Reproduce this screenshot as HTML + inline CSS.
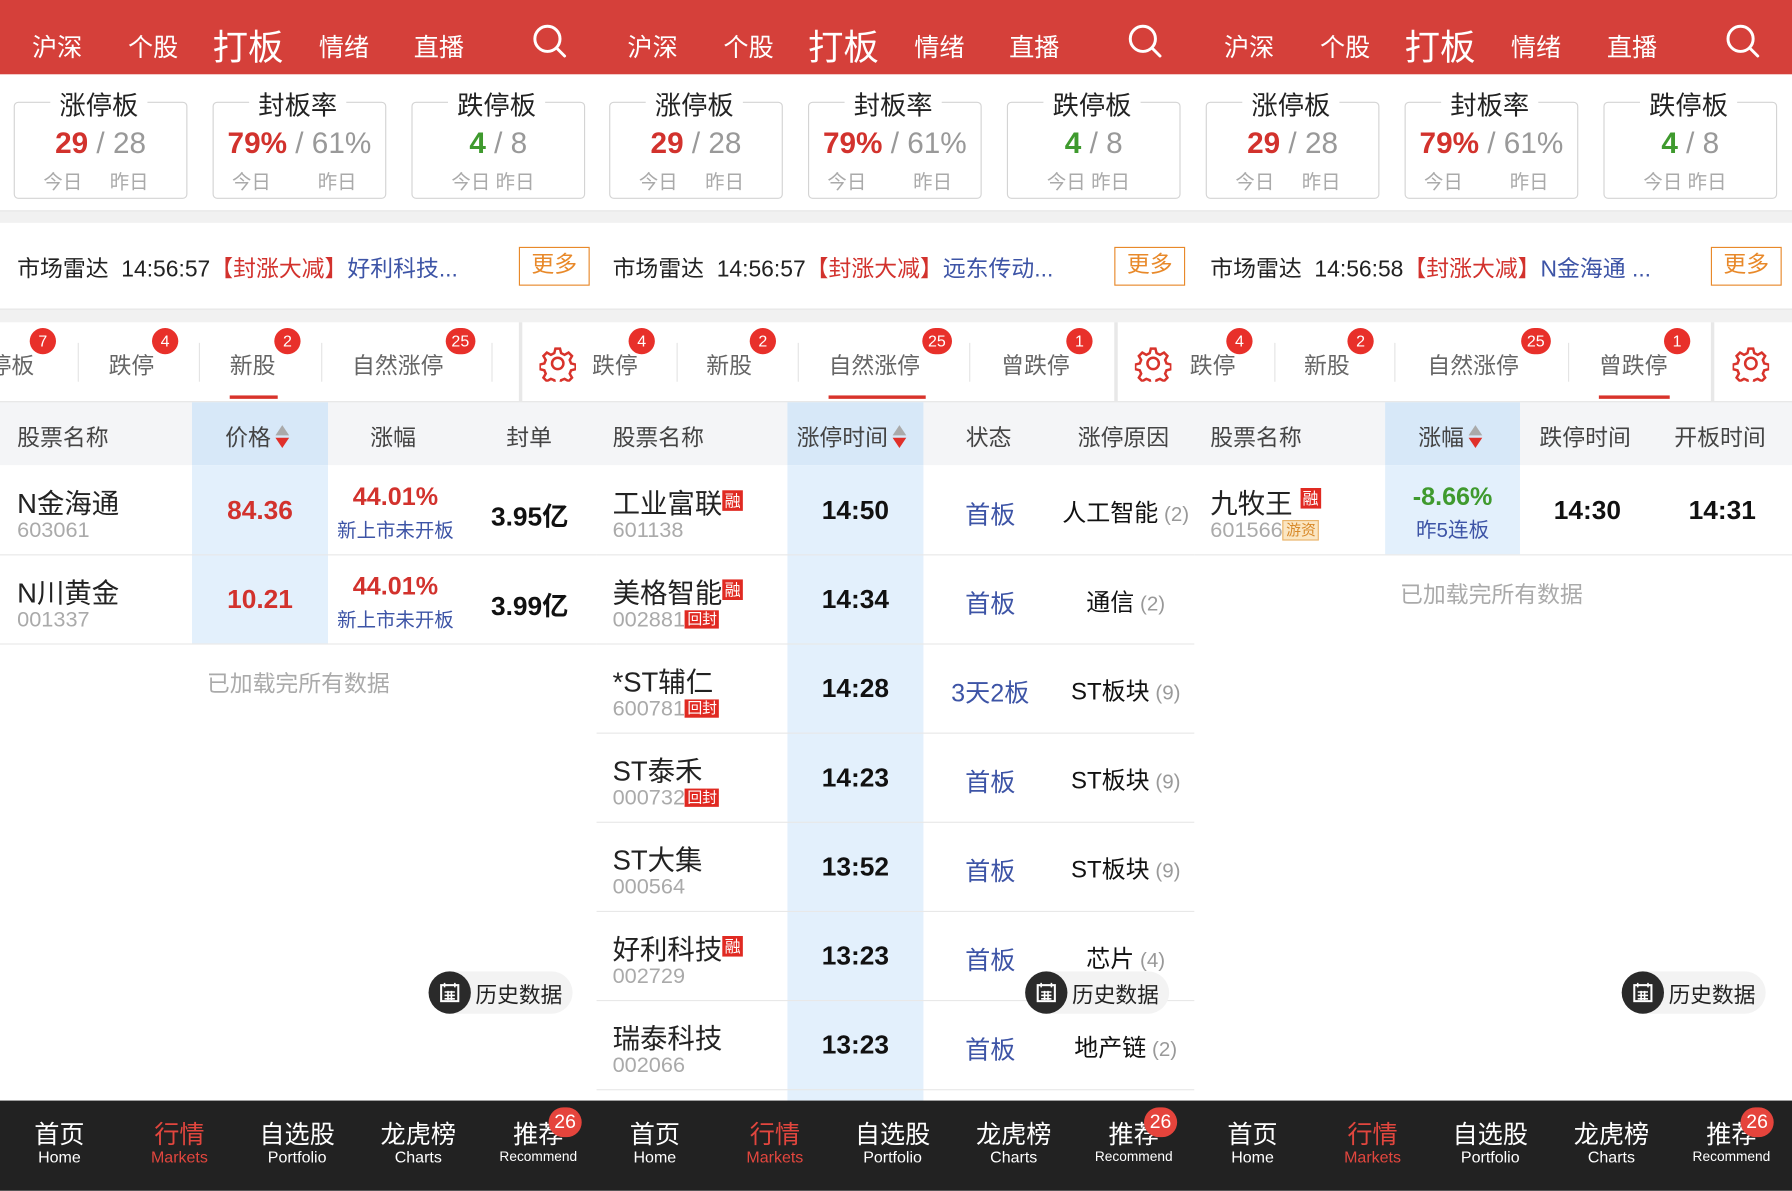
<!DOCTYPE html>
<html><head><meta charset="utf-8"><style>
*{margin:0;padding:0;box-sizing:border-box}
body{width:1792px;height:1191px;overflow:hidden;background:#fff;font-family:"Liberation Sans","Noto Sans CJK SC",sans-serif;}
#w{position:relative;width:1568px;height:1042px;transform:scale(1.142857);transform-origin:0 0;overflow:hidden}
.a{position:absolute;white-space:nowrap}
.c{text-align:center}
.hd{color:#fff;font-size:22px;top:24px}
.box{border:1.5px solid #d4d4d4;border-radius:4px;top:89px;height:85px;width:152px}
.bt{top:73px;font-size:23px;color:#222;background:#fff;padding:0 8px}
.num{top:110px;font-size:26px;width:152px;text-align:center;color:#999}
.num b{font-weight:bold}
.lab{top:145px;font-size:17px;color:#aaa}
.r{color:#d2322d}.g{color:#3f9a2e}.b{color:#3d54a6}.gr{color:#999}
.tab{top:304px;font-size:20px;color:#666}
.bd{top:287px;height:23px;min-width:23px;border-radius:12px;background:#e8302a;color:#fff;font-size:14px;line-height:23px;text-align:center;padding:0 5px}
.dv{top:300px;width:1px;height:34px;background:#e4e4e4}
.th{top:367px;font-size:20px;color:#444}
.nm{font-size:24px;color:#222}
.cd{font-size:19px;color:#aaa}
.v{font-size:23px;color:#111;font-weight:bold}
.tag{display:inline-block;background:#e02a22;color:#fff;font-size:14px;line-height:18px;padding:0 2px;vertical-align:6px}
.ctag{display:inline-block;background:#e02a22;color:#fff;font-size:13px;line-height:16px;padding:0 2px;vertical-align:2px}
.hl{height:1px;background:#e8e8e8}
.nav{top:963px;height:79px;background:#222;width:1568px}
.nz{top:975px;font-size:22px;color:#fff;width:100px;text-align:center}
.ne{top:1004px;font-size:14px;color:#fff;width:100px;text-align:center}
.hist{height:37px;border-radius:19px;background:#f3f3f3;width:126px}
.hist i{position:absolute;left:0;top:0;width:37px;height:37px;border-radius:50%;background:#2a2a2a}
.hist span{position:absolute;left:41px;top:6px;font-size:19px;color:#222}
.srt{display:inline-block;width:12px;height:22px;vertical-align:-3px;margin-left:4px;position:relative}
.srt:before{content:"";position:absolute;left:0;top:1px;border-left:6px solid transparent;border-right:6px solid transparent;border-bottom:9px solid #aaa}
.srt:after{content:"";position:absolute;left:0;top:12px;border-left:6px solid transparent;border-right:6px solid transparent;border-top:9px solid #e0302a}
</style></head><body><div id="w">

<div class="a" style="left:0;top:0;width:1568px;height:65px;background:#d5403a"></div>
<div class="a hd" style="left:28px">沪深</div><div class="a hd" style="left:112px">个股</div><div class="a hd" style="left:186px;top:16px;font-size:31px">打板</div><div class="a hd" style="left:279px">情绪</div><div class="a hd" style="left:362px">直播</div>
<div class="a hd" style="left:549px">沪深</div><div class="a hd" style="left:633px">个股</div><div class="a hd" style="left:707px;top:16px;font-size:31px">打板</div><div class="a hd" style="left:800px">情绪</div><div class="a hd" style="left:883px">直播</div>
<div class="a hd" style="left:1071px">沪深</div><div class="a hd" style="left:1155px">个股</div><div class="a hd" style="left:1229px;top:16px;font-size:31px">打板</div><div class="a hd" style="left:1322px">情绪</div><div class="a hd" style="left:1406px">直播</div>
<svg class="a" style="left:464px;top:20px" width="34" height="34" viewBox="0 0 34 34"><circle cx="15" cy="14" r="11" fill="none" stroke="#fff" stroke-width="2.6"/><path d="M23 22l7 7" stroke="#fff" stroke-width="2.6" stroke-linecap="round"/></svg>
<svg class="a" style="left:985px;top:20px" width="34" height="34" viewBox="0 0 34 34"><circle cx="15" cy="14" r="11" fill="none" stroke="#fff" stroke-width="2.6"/><path d="M23 22l7 7" stroke="#fff" stroke-width="2.6" stroke-linecap="round"/></svg>
<svg class="a" style="left:1508px;top:20px" width="34" height="34" viewBox="0 0 34 34"><circle cx="15" cy="14" r="11" fill="none" stroke="#fff" stroke-width="2.6"/><path d="M23 22l7 7" stroke="#fff" stroke-width="2.6" stroke-linecap="round"/></svg>

<div class="a box" style="left:12px"></div><div class="a bt" style="left:44px">涨停板</div><div class="a num" style="left:12px"><b class="r">29</b> / 28</div><div class="a lab" style="left:38px">今日</div><div class="a lab" style="left:96px">昨日</div>
<div class="a box" style="left:186px"></div><div class="a bt" style="left:218px">封板率</div><div class="a num" style="left:186px"><b class="r">79%</b> / 61%</div><div class="a lab" style="left:203px">今日</div><div class="a lab" style="left:278px">昨日</div>
<div class="a box" style="left:360px"></div><div class="a bt" style="left:392px">跌停板</div><div class="a num" style="left:360px"><b class="g">4</b> / 8</div><div class="a lab" style="left:395px">今日 昨日</div>

<div class="a box" style="left:533px"></div><div class="a bt" style="left:565px">涨停板</div><div class="a num" style="left:533px"><b class="r">29</b> / 28</div><div class="a lab" style="left:559px">今日</div><div class="a lab" style="left:617px">昨日</div>
<div class="a box" style="left:707px"></div><div class="a bt" style="left:739px">封板率</div><div class="a num" style="left:707px"><b class="r">79%</b> / 61%</div><div class="a lab" style="left:724px">今日</div><div class="a lab" style="left:799px">昨日</div>
<div class="a box" style="left:881px"></div><div class="a bt" style="left:913px">跌停板</div><div class="a num" style="left:881px"><b class="g">4</b> / 8</div><div class="a lab" style="left:916px">今日 昨日</div>

<div class="a box" style="left:1055px"></div><div class="a bt" style="left:1087px">涨停板</div><div class="a num" style="left:1055px"><b class="r">29</b> / 28</div><div class="a lab" style="left:1081px">今日</div><div class="a lab" style="left:1139px">昨日</div>
<div class="a box" style="left:1229px"></div><div class="a bt" style="left:1261px">封板率</div><div class="a num" style="left:1229px"><b class="r">79%</b> / 61%</div><div class="a lab" style="left:1246px">今日</div><div class="a lab" style="left:1321px">昨日</div>
<div class="a box" style="left:1403px"></div><div class="a bt" style="left:1435px">跌停板</div><div class="a num" style="left:1403px"><b class="g">4</b> / 8</div><div class="a lab" style="left:1438px">今日 昨日</div>

<div class="a" style="left:0;top:184px;width:1568px;height:11px;background:#f1f1f1;border-top:1px solid #e6e6e6"></div>
<div class="a" style="left:0;top:270px;width:1568px;height:12px;background:#f1f1f1;border-top:1px solid #e6e6e6"></div>

<div class="a" style="left:15px;top:219px;font-size:20px;color:#222">市场雷达&nbsp;&nbsp;14:56:57<span class="r">【封涨大减】</span><span class="b">好利科技...</span></div>
<div class="a c" style="left:454px;top:216px;width:62px;height:34px;border:1.5px solid #e8892a;color:#e8892a;font-size:20px;line-height:31px">更多</div>
<div class="a" style="left:536px;top:219px;font-size:20px;color:#222">市场雷达&nbsp;&nbsp;14:56:57<span class="r">【封涨大减】</span><span class="b">远东传动...</span></div>
<div class="a c" style="left:975px;top:216px;width:62px;height:34px;border:1.5px solid #e8892a;color:#e8892a;font-size:20px;line-height:31px">更多</div>
<div class="a" style="left:1059px;top:219px;font-size:20px;color:#222">市场雷达&nbsp;&nbsp;14:56:58<span class="r">【封涨大减】</span><span class="b">N金海通 ...</span></div>
<div class="a c" style="left:1497px;top:216px;width:62px;height:34px;border:1.5px solid #e8892a;color:#e8892a;font-size:20px;line-height:31px">更多</div>

<div class="a tab" style="left:-10px">停板</div><div class="a bd" style="left:26px">7</div><div class="a dv" style="left:68px"></div>
<div class="a tab" style="left:95px">跌停</div><div class="a bd" style="left:133px">4</div><div class="a dv" style="left:174px"></div>
<div class="a tab" style="left:201px">新股</div><div class="a bd" style="left:240px">2</div><div class="a" style="left:201px;top:346px;width:42px;height:3px;background:#d8332b"></div><div class="a dv" style="left:281px"></div>
<div class="a tab" style="left:308px">自然涨停</div><div class="a bd" style="left:390px">25</div><div class="a dv" style="left:430px"></div>
<div class="a" style="left:454px;top:282px;width:3px;height:70px;background:#e8e8e8"></div>
<div class="a tab" style="left:518px">跌停</div><div class="a bd" style="left:550px">4</div><div class="a dv" style="left:592px"></div>
<div class="a tab" style="left:618px">新股</div><div class="a bd" style="left:656px">2</div><div class="a dv" style="left:698px"></div>
<div class="a tab" style="left:725px">自然涨停</div><div class="a bd" style="left:807px">25</div><div class="a" style="left:725px;top:346px;width:85px;height:3px;background:#d8332b"></div><div class="a dv" style="left:848px"></div>
<div class="a tab" style="left:876px">曾跌停</div><div class="a bd" style="left:933px">1</div>
<div class="a" style="left:975px;top:282px;width:3px;height:70px;background:#e8e8e8"></div>
<div class="a tab" style="left:1041px">跌停</div><div class="a bd" style="left:1073px">4</div><div class="a dv" style="left:1115px"></div>
<div class="a tab" style="left:1141px">新股</div><div class="a bd" style="left:1179px">2</div><div class="a dv" style="left:1220px"></div>
<div class="a tab" style="left:1249px">自然涨停</div><div class="a bd" style="left:1331px">25</div><div class="a dv" style="left:1372px"></div>
<div class="a tab" style="left:1399px">曾跌停</div><div class="a bd" style="left:1456px">1</div><div class="a" style="left:1399px;top:346px;width:62px;height:3px;background:#d8332b"></div>
<div class="a" style="left:1497px;top:282px;width:3px;height:70px;background:#e8e8e8"></div>
<svg class="a" style="left:472px;top:302px" width="32" height="32" viewBox="0 0 32 32"><g fill="none" stroke="#d8332b" stroke-width="2.2"><circle cx="16" cy="16" r="5"/><path d="M14 3h4l1 4 3 1.5 3.5-2 3 3-2 3.5 1.2 3 4 1v4l-4 1-1.2 3 2 3.5-3 3-3.5-2-3 1.2-1 4h-4l-1-4-3-1.2-3.5 2-3-3 2-3.5-1.2-3-4-1v-4l4-1 1.2-3-2-3.5 3-3 3.5 2 3-1.5z"/></g></svg>
<svg class="a" style="left:993px;top:302px" width="32" height="32" viewBox="0 0 32 32"><g fill="none" stroke="#d8332b" stroke-width="2.2"><circle cx="16" cy="16" r="5"/><path d="M14 3h4l1 4 3 1.5 3.5-2 3 3-2 3.5 1.2 3 4 1v4l-4 1-1.2 3 2 3.5-3 3-3.5-2-3 1.2-1 4h-4l-1-4-3-1.2-3.5 2-3-3 2-3.5-1.2-3-4-1v-4l4-1 1.2-3-2-3.5 3-3 3.5 2 3-1.5z"/></g></svg>
<svg class="a" style="left:1516px;top:302px" width="32" height="32" viewBox="0 0 32 32"><g fill="none" stroke="#d8332b" stroke-width="2.2"><circle cx="16" cy="16" r="5"/><path d="M14 3h4l1 4 3 1.5 3.5-2 3 3-2 3.5 1.2 3 4 1v4l-4 1-1.2 3 2 3.5-3 3-3.5-2-3 1.2-1 4h-4l-1-4-3-1.2-3.5 2-3-3 2-3.5-1.2-3-4-1v-4l4-1 1.2-3-2-3.5 3-3 3.5 2 3-1.5z"/></g></svg>

<div class="a" style="left:0;top:351px;width:1568px;height:56px;background:#f4f5f7;border-top:1px solid #e6e6e6"></div>
<div class="a" style="left:168px;top:352px;width:119px;height:55px;background:#d7e8f8"></div>
<div class="a" style="left:689px;top:352px;width:119px;height:55px;background:#d7e8f8"></div>
<div class="a" style="left:1212px;top:352px;width:118px;height:55px;background:#d7e8f8"></div>

<div class="a th" style="left:15px">股票名称</div><div class="a th" style="left:197px">价格<span class="srt"></span></div><div class="a th" style="left:324px">涨幅</div><div class="a th" style="left:443px">封单</div>
<div class="a th" style="left:536px">股票名称</div><div class="a th" style="left:697px">涨停时间<span class="srt"></span></div><div class="a th" style="left:845px">状态</div><div class="a th" style="left:943px">涨停原因</div>
<div class="a th" style="left:1059px">股票名称</div><div class="a th" style="left:1241px">涨幅<span class="srt"></span></div><div class="a th" style="left:1347px">跌停时间</div><div class="a th" style="left:1465px">开板时间</div>

<div class="a" style="left:168px;top:407px;width:119px;height:156px;background:#e3f0fc"></div>
<div class="a" style="left:689px;top:407px;width:119px;height:556px;background:#e3f0fc"></div>
<div class="a" style="left:1212px;top:407px;width:118px;height:78px;background:#e3f0fc"></div>

<div class="a nm" style="left:15px;top:421px">N金海通</div><div class="a cd" style="left:15px;top:454px">603061</div>
<div class="a c v" style="left:168px;width:119px;top:433px;color:#d2322d">84.36</div>
<div class="a c r" style="left:287px;width:118px;top:422px;font-size:22px;font-weight:bold">44.01%</div><div class="a c b" style="left:287px;width:118px;top:450px;font-size:17px">新上市未开板</div>
<div class="a c v" style="left:405px;width:117px;top:433px">3.95亿</div>
<div class="a hl" style="left:0;top:485px;width:522px"></div>
<div class="a nm" style="left:15px;top:499px">N川黄金</div><div class="a cd" style="left:15px;top:532px">001337</div>
<div class="a c v" style="left:168px;width:119px;top:511px;color:#d2322d">10.21</div>
<div class="a c r" style="left:287px;width:118px;top:500px;font-size:22px;font-weight:bold">44.01%</div><div class="a c b" style="left:287px;width:118px;top:528px;font-size:17px">新上市未开板</div>
<div class="a c v" style="left:405px;width:117px;top:511px">3.99亿</div>
<div class="a hl" style="left:0;top:563px;width:522px"></div>
<div class="a c" style="left:0;width:522px;top:582px;font-size:20px;color:#aaa">已加载完所有数据</div>

<div class="a nm" style="left:536px;top:421px">工业富联<span class="tag">融</span></div><div class="a cd" style="left:536px;top:454px">601138</div>
<div class="a c v" style="left:689px;width:119px;top:433px">14:50</div><div class="a c b" style="left:808px;width:117px;top:433px;font-size:22px">首板</div><div class="a c" style="left:925px;width:120px;top:433px;font-size:21px;color:#111">人工智能<span class="gr" style="font-size:18px"> (2)</span></div>
<div class="a hl" style="left:522px;top:485px;width:523px"></div>
<div class="a nm" style="left:536px;top:499px">美格智能<span class="tag">融</span></div><div class="a cd" style="left:536px;top:532px">002881<span class="ctag">回封</span></div>
<div class="a c v" style="left:689px;width:119px;top:511px">14:34</div><div class="a c b" style="left:808px;width:117px;top:511px;font-size:22px">首板</div><div class="a c" style="left:925px;width:120px;top:511px;font-size:21px;color:#111">通信<span class="gr" style="font-size:18px"> (2)</span></div>
<div class="a hl" style="left:522px;top:563px;width:523px"></div>
<div class="a nm" style="left:536px;top:577px">*ST辅仁</div><div class="a cd" style="left:536px;top:610px">600781<span class="ctag">回封</span></div>
<div class="a c v" style="left:689px;width:119px;top:589px">14:28</div><div class="a c b" style="left:808px;width:117px;top:589px;font-size:22px">3天2板</div><div class="a c" style="left:925px;width:120px;top:589px;font-size:21px;color:#111">ST板块<span class="gr" style="font-size:18px"> (9)</span></div>
<div class="a hl" style="left:522px;top:641px;width:523px"></div>
<div class="a nm" style="left:536px;top:655px">ST泰禾</div><div class="a cd" style="left:536px;top:688px">000732<span class="ctag">回封</span></div>
<div class="a c v" style="left:689px;width:119px;top:667px">14:23</div><div class="a c b" style="left:808px;width:117px;top:667px;font-size:22px">首板</div><div class="a c" style="left:925px;width:120px;top:667px;font-size:21px;color:#111">ST板块<span class="gr" style="font-size:18px"> (9)</span></div>
<div class="a hl" style="left:522px;top:719px;width:523px"></div>
<div class="a nm" style="left:536px;top:733px">ST大集</div><div class="a cd" style="left:536px;top:766px">000564</div>
<div class="a c v" style="left:689px;width:119px;top:745px">13:52</div><div class="a c b" style="left:808px;width:117px;top:745px;font-size:22px">首板</div><div class="a c" style="left:925px;width:120px;top:745px;font-size:21px;color:#111">ST板块<span class="gr" style="font-size:18px"> (9)</span></div>
<div class="a hl" style="left:522px;top:797px;width:523px"></div>
<div class="a nm" style="left:536px;top:811px">好利科技<span class="tag">融</span></div><div class="a cd" style="left:536px;top:844px">002729</div>
<div class="a c v" style="left:689px;width:119px;top:823px">13:23</div><div class="a c b" style="left:808px;width:117px;top:823px;font-size:22px">首板</div><div class="a c" style="left:925px;width:120px;top:823px;font-size:21px;color:#111">芯片<span class="gr" style="font-size:18px"> (4)</span></div>
<div class="a hl" style="left:522px;top:875px;width:523px"></div>
<div class="a nm" style="left:536px;top:889px">瑞泰科技</div><div class="a cd" style="left:536px;top:922px">002066</div>
<div class="a c v" style="left:689px;width:119px;top:901px">13:23</div><div class="a c b" style="left:808px;width:117px;top:901px;font-size:22px">首板</div><div class="a c" style="left:925px;width:120px;top:901px;font-size:21px;color:#111">地产链<span class="gr" style="font-size:18px"> (2)</span></div>
<div class="a hl" style="left:522px;top:953px;width:523px"></div>

<div class="a nm" style="left:1059px;top:421px">九牧王 <span class="tag" style="vertical-align:8px">融</span></div><div class="a cd" style="left:1059px;top:454px">601566<span class="ctag" style="background:#fbe6c2;color:#d8892a;border:1px solid #e9b36a">游资</span></div>
<div class="a c g" style="left:1212px;width:118px;top:422px;font-size:22px;font-weight:bold">-8.66%</div><div class="a c b" style="left:1212px;width:118px;top:450px;font-size:18px">昨5连板</div>
<div class="a c v" style="left:1330px;width:118px;top:433px">14:30</div><div class="a c v" style="left:1448px;width:118px;top:433px">14:31</div>
<div class="a hl" style="left:1045px;top:485px;width:523px"></div>
<div class="a c" style="left:1045px;width:520px;top:504px;font-size:20px;color:#aaa">已加载完所有数据</div>

<div class="a hist" style="left:375px;top:850px"><i></i><span>历史数据</span></div>
<div class="a hist" style="left:897px;top:850px"><i></i><span>历史数据</span></div>
<div class="a hist" style="left:1419px;top:850px"><i></i><span>历史数据</span></div>
<svg class="a" style="left:384px;top:859px" width="19" height="19" viewBox="0 0 19 19"><rect x="2" y="3" width="15" height="14" fill="none" stroke="#fff" stroke-width="1.8"/><path d="M5 1v4M14 1v4M5 9h9M5 12h9M5 15h9M8 8v8M11 8v8" stroke="#fff" stroke-width="1.4"/></svg>
<svg class="a" style="left:906px;top:859px" width="19" height="19" viewBox="0 0 19 19"><rect x="2" y="3" width="15" height="14" fill="none" stroke="#fff" stroke-width="1.8"/><path d="M5 1v4M14 1v4M5 9h9M5 12h9M5 15h9M8 8v8M11 8v8" stroke="#fff" stroke-width="1.4"/></svg>
<svg class="a" style="left:1428px;top:859px" width="19" height="19" viewBox="0 0 19 19"><rect x="2" y="3" width="15" height="14" fill="none" stroke="#fff" stroke-width="1.8"/><path d="M5 1v4M14 1v4M5 9h9M5 12h9M5 15h9M8 8v8M11 8v8" stroke="#fff" stroke-width="1.4"/></svg>

<div class="a nav" style="left:0"></div>
<div class="a nz" style="left:2px">首页</div><div class="a ne" style="left:2px">Home</div>
<div class="a nz" style="left:107px;color:#e2463e">行情</div><div class="a ne" style="left:107px;color:#e2463e">Markets</div>
<div class="a nz" style="left:210px">自选股</div><div class="a ne" style="left:210px">Portfolio</div>
<div class="a nz" style="left:316px">龙虎榜</div><div class="a ne" style="left:316px">Charts</div>
<div class="a nz" style="left:421px">推荐</div><div class="a ne" style="left:421px;font-size:12px;top:1005px">Recommend</div><div class="a bd" style="left:480px;top:969px;height:26px;line-height:26px;border-radius:13px;font-size:17px;background:#e5443c">26</div>

<div class="a nz" style="left:523px">首页</div><div class="a ne" style="left:523px">Home</div>
<div class="a nz" style="left:628px;color:#e2463e">行情</div><div class="a ne" style="left:628px;color:#e2463e">Markets</div>
<div class="a nz" style="left:731px">自选股</div><div class="a ne" style="left:731px">Portfolio</div>
<div class="a nz" style="left:837px">龙虎榜</div><div class="a ne" style="left:837px">Charts</div>
<div class="a nz" style="left:942px">推荐</div><div class="a ne" style="left:942px;font-size:12px;top:1005px">Recommend</div><div class="a bd" style="left:1001px;top:969px;height:26px;line-height:26px;border-radius:13px;font-size:17px;background:#e5443c">26</div>

<div class="a nz" style="left:1046px">首页</div><div class="a ne" style="left:1046px">Home</div>
<div class="a nz" style="left:1151px;color:#e2463e">行情</div><div class="a ne" style="left:1151px;color:#e2463e">Markets</div>
<div class="a nz" style="left:1254px">自选股</div><div class="a ne" style="left:1254px">Portfolio</div>
<div class="a nz" style="left:1360px">龙虎榜</div><div class="a ne" style="left:1360px">Charts</div>
<div class="a nz" style="left:1465px">推荐</div><div class="a ne" style="left:1465px;font-size:12px;top:1005px">Recommend</div><div class="a bd" style="left:1523px;top:969px;height:26px;line-height:26px;border-radius:13px;font-size:17px;background:#e5443c">26</div>

</div></body></html>
